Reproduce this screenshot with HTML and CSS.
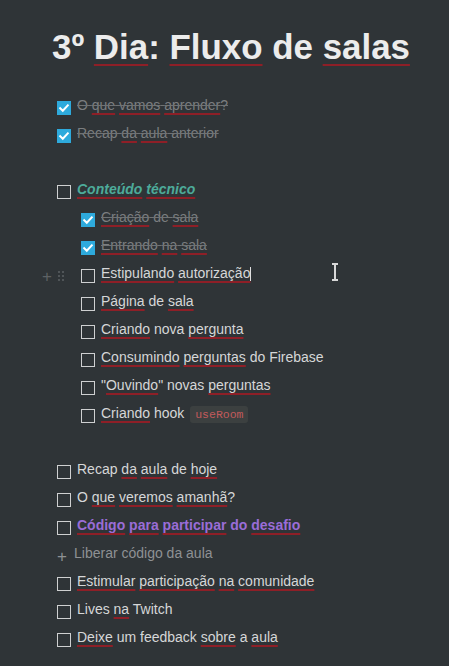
FILE: index.html
```html
<!DOCTYPE html>
<html lang="pt-BR">
<head>
<meta charset="utf-8">
<title>3º Dia: Fluxo de salas</title>
<link rel="stylesheet" href="styles.css">
</head>
<body>
<div class="page">
  <h1 class="title">3º <span class="sp">Dia</span>: <span class="sp">Fluxo</span> de <span class="sp">salas</span></h1>

  <div class="list">
    <div class="todo done">
      <span class="box on"><svg viewBox="0 0 14 14"><path d="M3.2 7.2l2.6 2.6 5-5.4" /></svg></span>
      <span class="txt">O <span class="sp">que</span> <span class="sp">vamos</span> <span class="sp">aprender</span>?</span>
    </div>
    <div class="todo done">
      <span class="box on"><svg viewBox="0 0 14 14"><path d="M3.2 7.2l2.6 2.6 5-5.4" /></svg></span>
      <span class="txt">Recap <span class="sp">da</span> <span class="sp">aula</span> anterior</span>
    </div>

    <div class="blank"></div>

    <div class="todo">
      <span class="box"></span>
      <span class="txt green"><span class="sp">Conteúdo</span> <span class="sp">técnico</span></span>
    </div>

    <div class="children">
      <div class="todo done">
        <span class="box on"><svg viewBox="0 0 14 14"><path d="M3.2 7.2l2.6 2.6 5-5.4" /></svg></span>
        <span class="txt"><span class="sp">Criação</span> de <span class="sp">sala</span></span>
      </div>
      <div class="todo done">
        <span class="box on"><svg viewBox="0 0 14 14"><path d="M3.2 7.2l2.6 2.6 5-5.4" /></svg></span>
        <span class="txt"><span class="sp">Entrando</span> <span class="sp">na</span> <span class="sp">sala</span></span>
      </div>
      <div class="todo hover">
        <span class="handle"><span class="plus">+</span><svg class="dots" viewBox="0 0 8 12"><circle cx="2" cy="2" r="1"/><circle cx="6" cy="2" r="1"/><circle cx="2" cy="6" r="1"/><circle cx="6" cy="6" r="1"/><circle cx="2" cy="10" r="1"/><circle cx="6" cy="10" r="1"/></svg></span>
        <span class="box"></span>
        <span class="txt"><span class="sp">Estipulando</span> <span class="sp">autorização</span><span class="caret"></span></span>
        <svg class="ibeam" viewBox="0 0 8 18"><path d="M1 1h6M1 17h6M4 1v16" /></svg>
      </div>
      <div class="todo">
        <span class="box"></span>
        <span class="txt"><span class="sp">Página</span> de <span class="sp">sala</span></span>
      </div>
      <div class="todo">
        <span class="box"></span>
        <span class="txt"><span class="sp">Criando</span> nova <span class="sp">pergunta</span></span>
      </div>
      <div class="todo">
        <span class="box"></span>
        <span class="txt"><span class="sp">Consumindo</span> <span class="sp">perguntas</span> do Firebase</span>
      </div>
      <div class="todo">
        <span class="box"></span>
        <span class="txt">"<span class="sp">Ouvindo</span>" novas <span class="sp">perguntas</span></span>
      </div>
      <div class="todo">
        <span class="box"></span>
        <span class="txt"><span class="sp">Criando</span> hook <code class="code">useRoom</code></span>
      </div>
    </div>

    <div class="blank"></div>

    <div class="todo">
      <span class="box"></span>
      <span class="txt">Recap <span class="sp">da</span> <span class="sp">aula</span> de <span class="sp">hoje</span></span>
    </div>
    <div class="todo">
      <span class="box"></span>
      <span class="txt">O <span class="sp">que</span> <span class="sp">veremos</span> <span class="sp">amanhã</span>?</span>
    </div>
    <div class="todo">
      <span class="box"></span>
      <span class="txt purple"><span class="sp">Código</span> <span class="sp">para</span> <span class="sp">participar</span> do <span class="sp">desafio</span></span>
    </div>
    <div class="toggle">
      <span class="tplus">+</span>
      <span class="ttxt">Liberar código da aula</span>
    </div>
    <div class="todo">
      <span class="box"></span>
      <span class="txt"><span class="sp">Estimular</span> <span class="sp">participação</span> <span class="sp">na</span> <span class="sp">comunidade</span></span>
    </div>
    <div class="todo">
      <span class="box"></span>
      <span class="txt">Lives <span class="sp">na</span> Twitch</span>
    </div>
    <div class="todo">
      <span class="box"></span>
      <span class="txt"><span class="sp">Deixe</span> um feedback <span class="sp">sobre</span> a <span class="sp">aula</span></span>
    </div>
  </div>
</div>
</body>
</html>
```

FILE: styles.css
```css
html, body {
  margin: 0;
  padding: 0;
  background: #2f3437;
}

body {
  font-family: "Liberation Sans", Arial, sans-serif;
  color: #d6d7d8;
  width: 449px;
  height: 666px;
  overflow: hidden;
}

.page {
  padding: 25px 0 0 52px;
}

.title {
  margin: 0;
  font-size: 34.9px;
  line-height: 44px;
  font-weight: 700;
  color: #ececec;
  letter-spacing: 0;
}

.sp {
  text-decoration-line: underline;
  text-decoration-color: #8e1f27;
  text-decoration-thickness: 1.5px;
  text-underline-offset: 3px;
}

.title .sp {
  text-decoration-thickness: 2px;
  text-underline-offset: 5px;
}

.list {
  margin-top: 23px;
  margin-left: 5px;
  display: flex;
  flex-direction: column;
}

.children {
  display: flex;
  flex-direction: column;
  padding-left: 24px;
}

.blank {
  height: 28px;
}

.todo {
  position: relative;
  display: flex;
  align-items: center;
  height: 28px;
  font-size: 14px;
}

.box {
  flex: none;
  width: 14px;
  height: 14px;
  box-sizing: border-box;
  border: 1.6px solid #cfd0d1;
  margin-right: 6px;
  margin-top: 3px;
  display: flex;
  align-items: center;
  justify-content: center;
}

.box.on {
  border: none;
  background: #2eaadc;
}

.box svg {
  width: 14px;
  height: 14px;
  fill: none;
  stroke: #ffffff;
  stroke-width: 2;
  stroke-linecap: square;
}

.txt {
  white-space: nowrap;
  position: relative;
  padding-bottom: 2px;
}

.done .txt {
  color: #7b7e80;
  text-decoration: line-through;
  text-decoration-color: #6f7274;
  text-decoration-thickness: 1px;
}

.green {
  color: #4dab9a;
  font-weight: 700;
  font-style: italic;
}

.purple {
  color: #9a6dd7;
  font-weight: 700;
}

.code {
  font-family: "Liberation Mono", monospace;
  font-size: 11.5px;
  color: #c25a5c;
  background: rgba(135, 131, 120, 0.15);
  padding: 2px 5px;
  border-radius: 3px;
  margin-left: 2px;
}

.handle {
  position: absolute;
  left: -39px;
  top: 0;
  height: 28px;
  display: flex;
  align-items: center;
  gap: 5px;
  color: #5d6164;
  margin-top: 2px;
}

.plus {
  font-size: 17px;
  line-height: 1;
  font-weight: 300;
}

.dots {
  width: 8px;
  height: 12px;
  fill: #5d6164;
}

.caret {
  display: inline-block;
  width: 1px;
  height: 14px;
  background: #e0e0e0;
  vertical-align: -3px;
  margin-left: 0;
}

.ibeam {
  position: absolute;
  left: 250px;
  top: 3px;
  width: 8px;
  height: 18px;
  fill: none;
  stroke: #d8d8d8;
  stroke-width: 2;
}

.toggle {
  display: flex;
  align-items: center;
  height: 28px;
  font-size: 14px;
  color: #8e9194;
}

.tplus {
  width: 17px;
  font-size: 17px;
  font-weight: 300;
  line-height: 1;
  margin-top: 4px;
}

.ttxt {
  padding-bottom: 2px;
}
```
